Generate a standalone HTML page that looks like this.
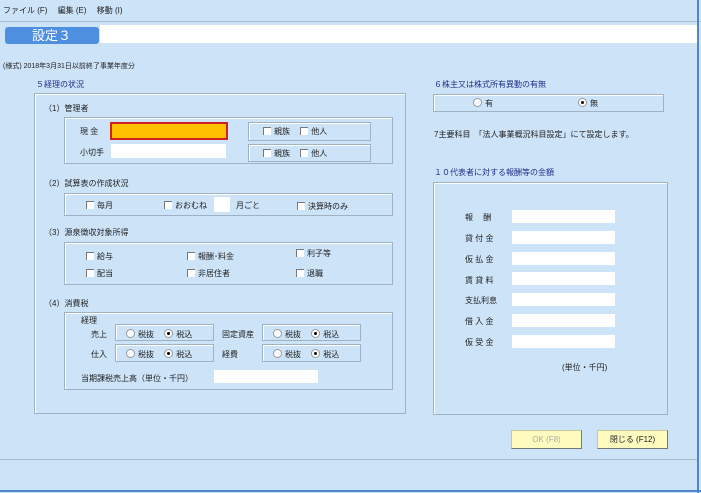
<!DOCTYPE html><html><head><meta charset="utf-8"><style>
body{margin:0;width:701px;height:493px;background:#cde3f8;font-family:"Liberation Sans","Noto Sans CJK JP",sans-serif;font-size:8px;color:#222;position:relative;overflow:hidden}
.a{position:absolute;white-space:nowrap}
.box{position:absolute;border:1px solid #9fb2c4;box-shadow:inset 1px 1px 0 #fff}
.in{position:absolute;background:#fff}
.cb{display:inline-block;width:7px;height:7px;background:#fff;border-top:1px solid #777;border-left:1px solid #777;vertical-align:-1px;margin-right:3px}
.rb{display:inline-block;width:7px;height:7px;border-radius:50%;background:#fff;border:1px solid #999;vertical-align:-1px;margin-right:3px;position:relative}
.rb.on:after{content:"";position:absolute;left:2px;top:2px;width:3px;height:3px;border-radius:50%;background:#000}
.blue{color:#1d2f8a}
.btn{position:absolute;background:#fffbbf;border:1px solid #c8c8a0;border-right-color:#777;border-bottom-color:#777;text-align:center;line-height:17px;font-size:8px}
</style></head><body>
<div class="a" style="left:3px;top:5px">ファイル (F)　 編集 (E)　 移動 (I)</div>
<div class="a" style="left:0;top:21px;width:701px;height:1px;background:#a9bccc"></div>
<div class="a" style="left:100px;top:25px;width:597px;height:18px;background:#fff"></div>
<div class="a" style="left:5px;top:27px;width:94px;height:17px;background:#4f8fe0;border-radius:3px;color:#fff;font-size:13px;line-height:17px;text-indent:27px">設定３</div>
<div class="a" style="left:697px;top:0;width:2px;height:493px;background:#4f88c6"></div>
<div class="a" style="left:0;top:490px;width:701px;height:2px;background:#4f88c6"></div>
<div class="a" style="left:3px;top:61px;font-size:7px">(様式) 2018年3月31日以前終了事業年度分</div>
<div class="a blue" style="left:36px;top:79px">５経理の状況</div>
<div class="box" style="left:34px;top:93px;width:370px;height:319px"></div>
<div class="a" style="left:44px;top:103px">（1）管理者</div>
<div class="box" style="left:64px;top:117px;width:327px;height:45px"></div>
<div class="a" style="left:80px;top:126px">現 金</div>
<div class="in" style="left:110px;top:122px;width:114px;height:14px;background:#ffc000;border:2px solid #d02020"></div>
<div class="a" style="left:80px;top:147px">小切手</div>
<div class="in" style="left:111px;top:144px;width:115px;height:14px"></div>
<div class="box" style="left:248px;top:122px;width:121px;height:17px"></div>
<div class="a" style="left:263px;top:126px"><span class="cb"></span>親族　 <span class="cb"></span>他人</div>
<div class="box" style="left:248px;top:144px;width:121px;height:16px"></div>
<div class="a" style="left:263px;top:148px"><span class="cb"></span>親族　 <span class="cb"></span>他人</div>
<div class="a" style="left:44px;top:178px">（2）試算表の作成状況</div>
<div class="box" style="left:64px;top:193px;width:327px;height:21px"></div>
<div class="a" style="left:86px;top:200px"><span class="cb"></span>毎月</div>
<div class="a" style="left:164px;top:200px"><span class="cb"></span>おおむね</div>
<div class="in" style="left:214px;top:197px;width:16px;height:15px"></div>
<div class="a" style="left:236px;top:200px">月ごと</div>
<div class="a" style="left:297px;top:201px"><span class="cb"></span>決算時のみ</div>
<div class="a" style="left:44px;top:227px">（3）源泉徴収対象所得</div>
<div class="box" style="left:64px;top:242px;width:327px;height:41px"></div>
<div class="a" style="left:86px;top:251px"><span class="cb"></span>給与</div>
<div class="a" style="left:187px;top:251px"><span class="cb"></span>報酬･料金</div>
<div class="a" style="left:296px;top:248px"><span class="cb"></span>利子等</div>
<div class="a" style="left:86px;top:268px"><span class="cb"></span>配当</div>
<div class="a" style="left:187px;top:268px"><span class="cb"></span>非居住者</div>
<div class="a" style="left:296px;top:268px"><span class="cb"></span>退職</div>
<div class="a" style="left:44px;top:298px">（4）消費税</div>
<div class="box" style="left:64px;top:312px;width:327px;height:76px"></div>
<div class="a" style="left:81px;top:315px">経理</div>
<div class="a" style="left:91px;top:329px">売上</div>
<div class="a" style="left:91px;top:349px">仕入</div>
<div class="a" style="left:222px;top:329px">固定資産</div>
<div class="a" style="left:222px;top:349px">経費</div>
<div class="box" style="left:115px;top:324px;width:97px;height:15px"></div>
<div class="box" style="left:115px;top:344px;width:97px;height:16px"></div>
<div class="box" style="left:262px;top:324px;width:97px;height:15px"></div>
<div class="box" style="left:262px;top:344px;width:97px;height:16px"></div>
<div class="a" style="left:126px;top:329px"><span class="rb"></span>税抜　 <span class="rb on"></span>税込</div>
<div class="a" style="left:126px;top:349px"><span class="rb"></span>税抜　 <span class="rb on"></span>税込</div>
<div class="a" style="left:273px;top:329px"><span class="rb"></span>税抜　 <span class="rb on"></span>税込</div>
<div class="a" style="left:273px;top:349px"><span class="rb"></span>税抜　 <span class="rb on"></span>税込</div>
<div class="a" style="left:81px;top:373px">当期課税売上高（単位・千円）</div>
<div class="in" style="left:214px;top:370px;width:104px;height:13px"></div>
<div class="a blue" style="left:434px;top:79px">６株主又は株式所有異動の有無</div>
<div class="box" style="left:433px;top:94px;width:229px;height:16px"></div>
<div class="a" style="left:473px;top:98px"><span class="rb"></span>有</div>
<div class="a" style="left:578px;top:98px"><span class="rb on"></span>無</div>
<div class="a" style="left:434px;top:129px">7主要科目　「法人事業概況科目設定」にて設定します。</div>
<div class="a blue" style="left:434px;top:167px">１０代表者に対する報酬等の金額</div>
<div class="box" style="left:433px;top:182px;width:233px;height:231px"></div>
<div class="a" style="left:465px;top:212px">報　 酬</div>
<div class="a" style="left:465px;top:233px">貸 付 金</div>
<div class="a" style="left:465px;top:254px">仮 払 金</div>
<div class="a" style="left:465px;top:275px">賃 貸 料</div>
<div class="a" style="left:465px;top:295px">支払利息</div>
<div class="a" style="left:465px;top:316px">借 入 金</div>
<div class="a" style="left:465px;top:337px">仮 受 金</div>
<div class="in" style="left:512px;top:210px;width:103px;height:13px"></div>
<div class="in" style="left:512px;top:231px;width:103px;height:13px"></div>
<div class="in" style="left:512px;top:252px;width:103px;height:13px"></div>
<div class="in" style="left:512px;top:272px;width:103px;height:13px"></div>
<div class="in" style="left:512px;top:293px;width:103px;height:13px"></div>
<div class="in" style="left:512px;top:314px;width:103px;height:13px"></div>
<div class="in" style="left:512px;top:335px;width:103px;height:13px"></div>
<div class="a" style="left:562px;top:362px">(単位・千円)</div>
<div class="btn" style="left:511px;top:430px;width:69px;height:17px;color:#aaa">OK (F8)</div>
<div class="btn" style="left:597px;top:430px;width:69px;height:17px">閉じる (F12)</div>
<div class="a" style="left:0;top:459px;width:697px;height:1px;background:#a9bccc"></div>
</body></html>
